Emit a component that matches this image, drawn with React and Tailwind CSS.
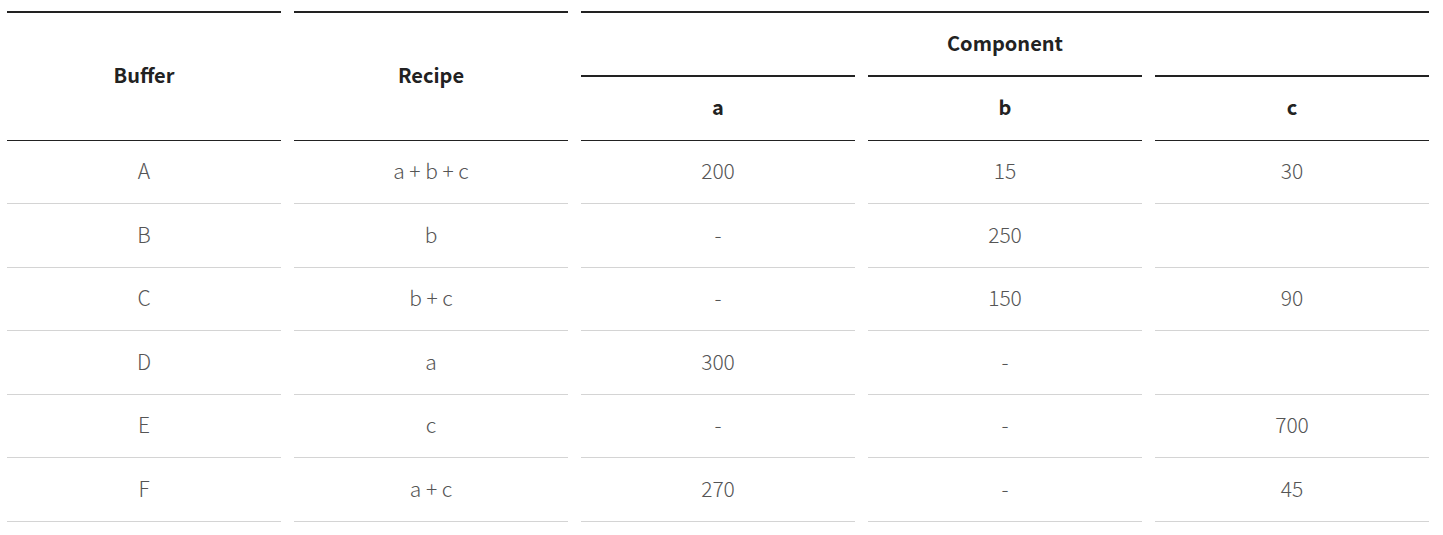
const rows = [
  { buffer: 'A', recipe: 'a + b + c', a: '200', b: '15', c: '30', h: 'h-[63px]' },
  { buffer: 'B', recipe: 'b', a: '-', b: '250', c: '', h: 'h-[64px]' },
  { buffer: 'C', recipe: 'b + c', a: '-', b: '150', c: '90', h: 'h-[63px]' },
  { buffer: 'D', recipe: 'a', a: '300', b: '-', c: '', h: 'h-[64px]' },
  { buffer: 'E', recipe: 'c', a: '-', b: '-', c: '700', h: 'h-[63px]' },
  { buffer: 'F', recipe: 'a + c', a: '270', b: '-', c: '45', h: 'h-[64px]' },
];

const head = 'flex items-center justify-center pb-[3px] text-[20px] font-semibold text-[#222]';
const cell = 'flex items-center justify-center pb-[2px] border-b border-[#d4d4d4] text-[21px] font-light text-[#555]';

const App = () => {
  return (
    <div className="bg-white min-h-[535px] pt-[11px] pl-[7px] font-['Noto_Sans_CJK_KR','Noto_Sans',sans-serif]">
      <div className="grid grid-cols-[274px_274px_274px_274px_274px] gap-x-[13px]">
        {/* Header */}
        <div className={`${head} row-span-2 border-t-2 border-b border-[#222] h-[130px]`}>Buffer</div>
        <div className={`${head} row-span-2 border-t-2 border-b border-[#222] h-[130px]`}>Recipe</div>
        <div className={`${head} col-span-3 border-t-2 border-[#222] h-[64px]`}>Component</div>
        <div className={`${head} border-t-2 border-b border-[#222] h-[66px]`}>a</div>
        <div className={`${head} border-t-2 border-b border-[#222] h-[66px]`}>b</div>
        <div className={`${head} border-t-2 border-b border-[#222] h-[66px]`}>c</div>

        {/* Body */}
        {rows.map((row) => (
          <div key={row.buffer} className="contents">
            <div className={`${cell} ${row.h}`}>{row.buffer}</div>
            <div className={`${cell} ${row.h}`}>{row.recipe}</div>
            <div className={`${cell} ${row.h}`}>{row.a}</div>
            <div className={`${cell} ${row.h}`}>{row.b}</div>
            <div className={`${cell} ${row.h}`}>{row.c}</div>
          </div>
        ))}
      </div>
    </div>
  );
};

export default App;
